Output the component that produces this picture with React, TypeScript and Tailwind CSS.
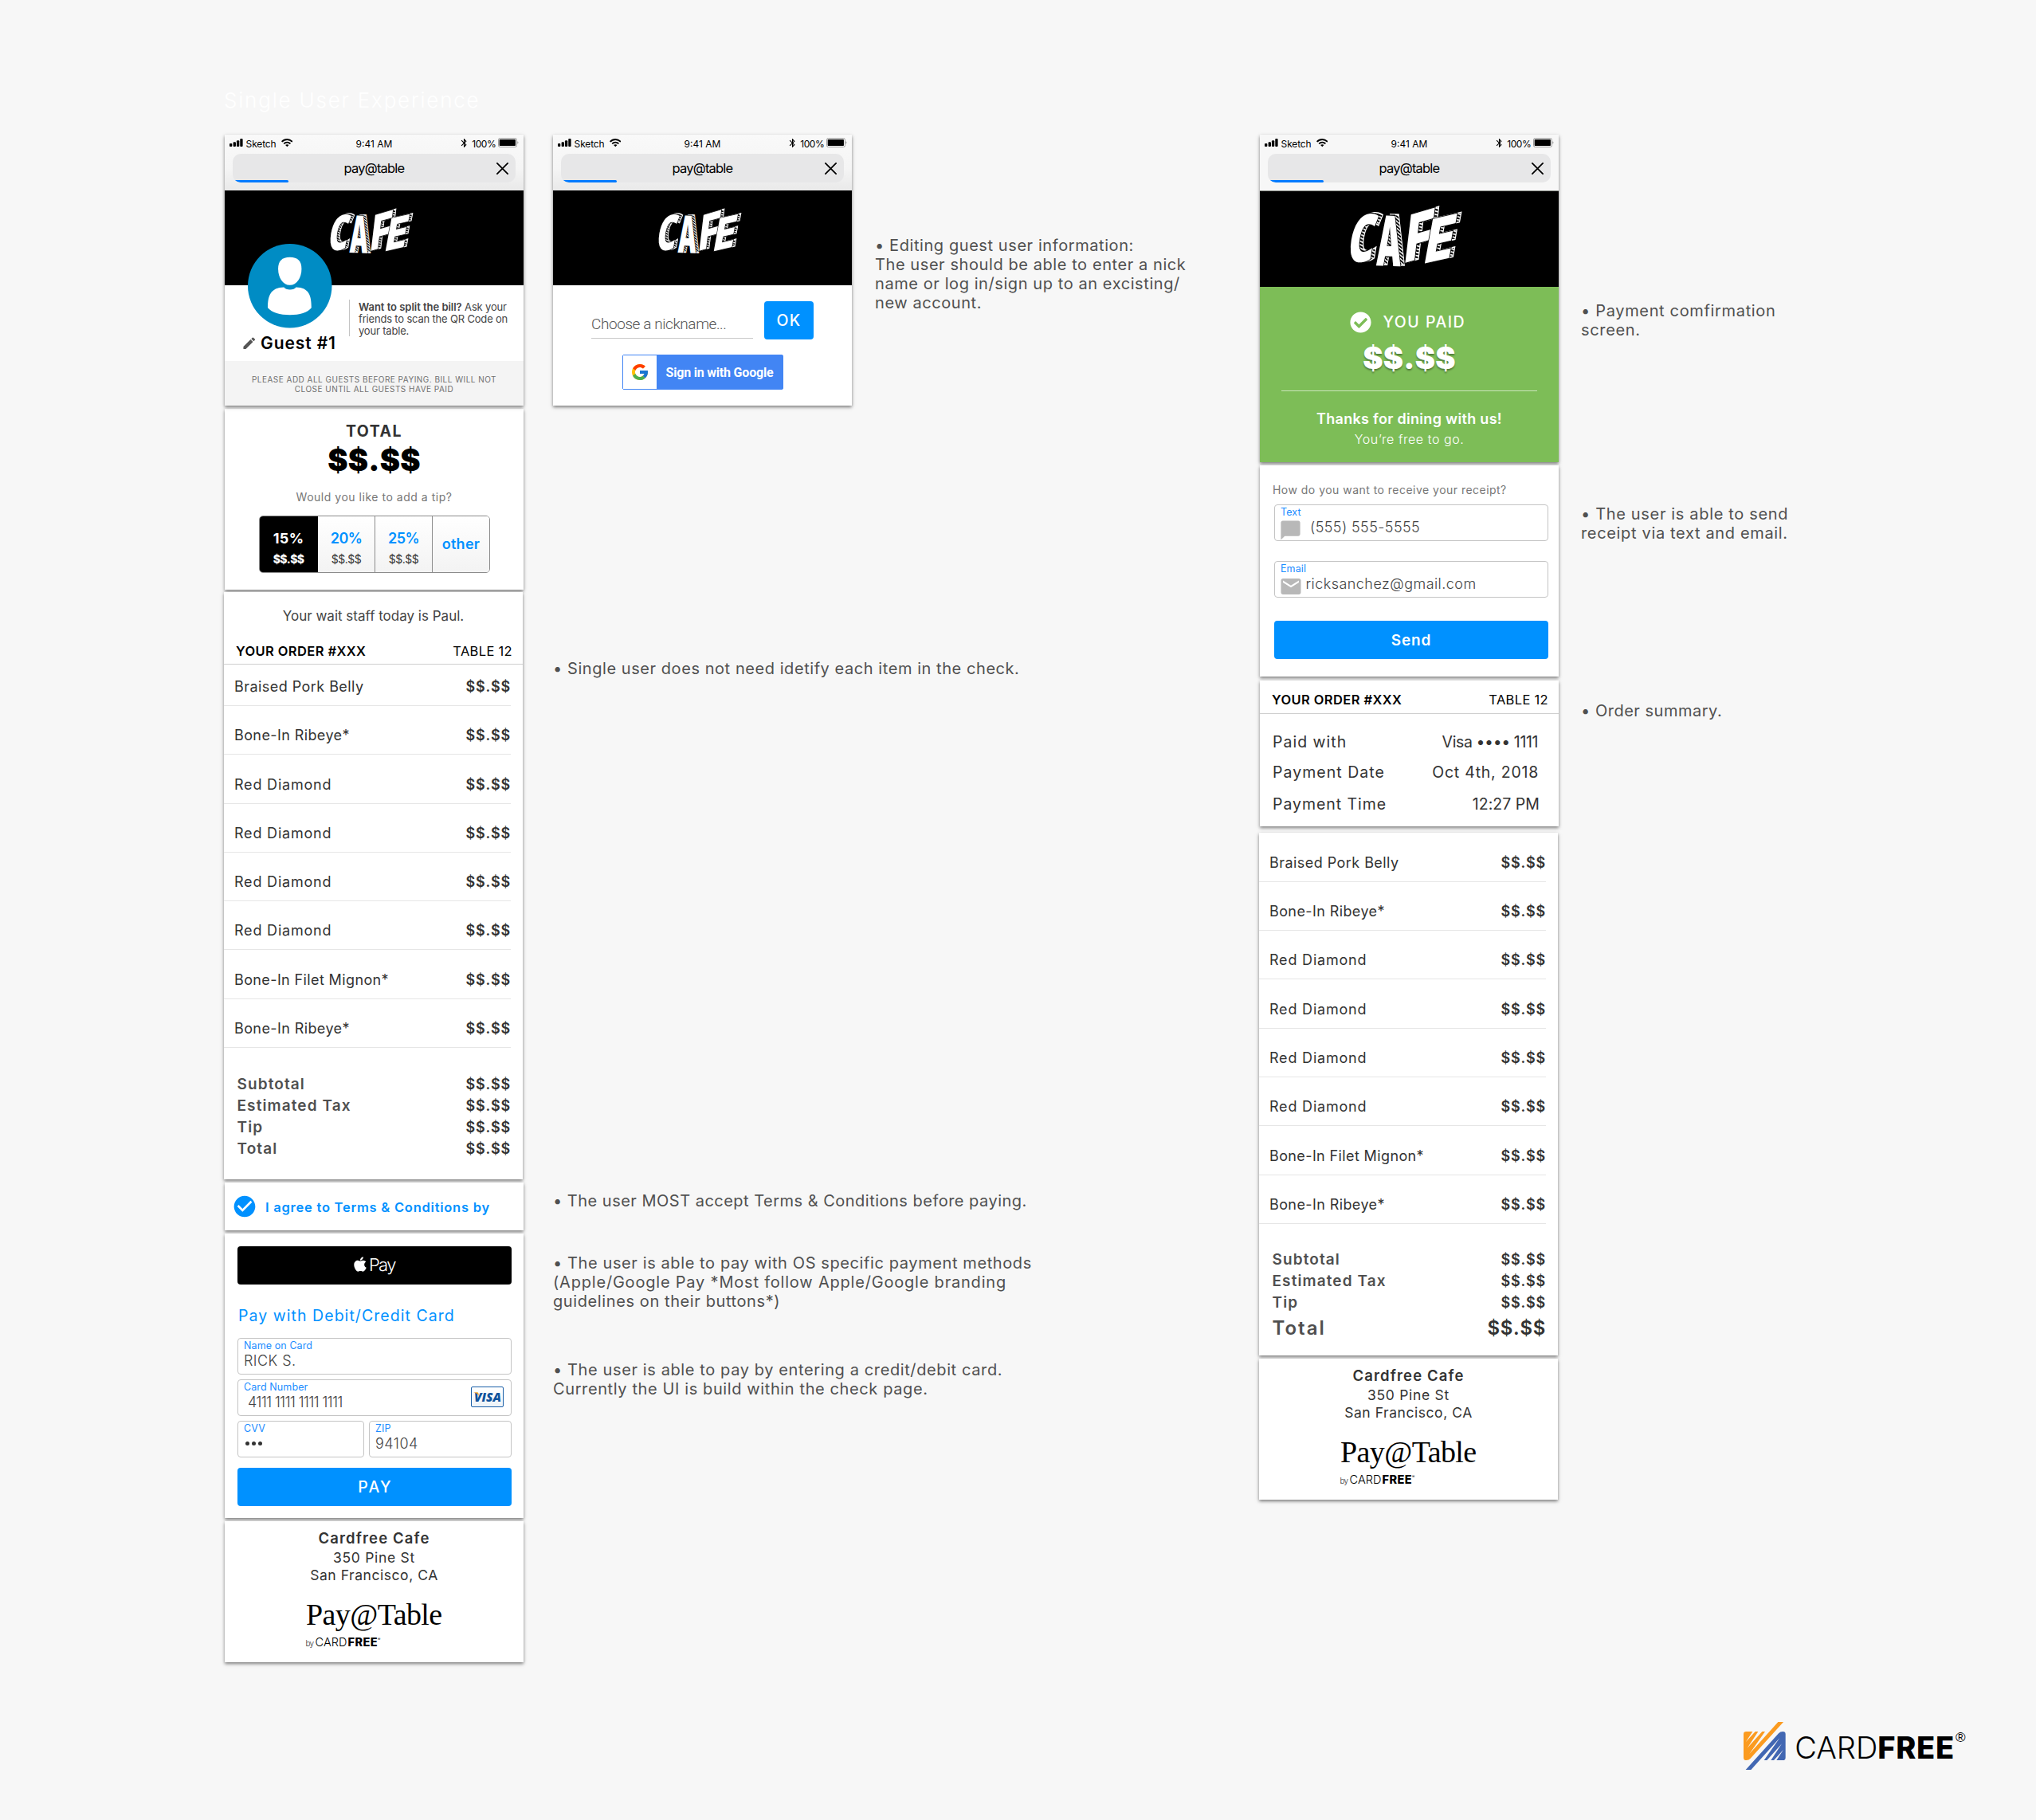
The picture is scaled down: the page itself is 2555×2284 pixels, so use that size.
import type { ReactNode } from "react";
import { FaApple, FaCheckCircle } from "react-icons/fa";
import { FcGoogle } from "react-icons/fc";
import { MdBluetooth, MdChatBubble, MdCheckCircle, MdEdit, MdEmail } from "react-icons/md";

const CARD = "shadow-[0_2px_4px_rgba(0,0,0,0.5)]";

const ITEMS = [
  { name: "Braised Pork Belly", tracking: "tracking-[0.45px]" },
  { name: "Bone-In Ribeye*", tracking: "tracking-[0.4px]" },
  { name: "Red Diamond", tracking: "tracking-[0.8px]" },
  { name: "Red Diamond", tracking: "tracking-[0.8px]" },
  { name: "Red Diamond", tracking: "tracking-[0.8px]" },
  { name: "Red Diamond", tracking: "tracking-[0.8px]" },
  { name: "Bone-In Filet Mignon*", tracking: "tracking-[0.38px]" },
  { name: "Bone-In Ribeye*", tracking: "tracking-[0.4px]" },
];

function SignalIcon() {
  return (
    <svg viewBox="0 0 50 30" className="h-[10px] w-[16.6px]" fill="#000">
      <rect x="0" y="18" width="10" height="12" rx="3" />
      <rect x="14" y="13" width="10" height="17" rx="3" />
      <rect x="27" y="7" width="10" height="23" rx="3" />
      <rect x="40" y="0" width="10" height="30" rx="3" />
    </svg>
  );
}

function WifiIcon() {
  return (
    <svg viewBox="0 0 44 32" className="h-[10.6px] w-[14.6px]" fill="none" stroke="#000" strokeWidth="5.500">
      <path d="M2 12C13 0 31 0 42 12" />
      <path d="M9.500 19.500C16.500 12 27.500 12 34.500 19.500" />
      <path d="M22 31l-6.500-6.500c3.500-3.500 9.500-3.500 13 0z" fill="#000" stroke="none" />
    </svg>
  );
}

function BatteryIcon() {
  return (
    <svg viewBox="0 0 77 36" className="h-[12px] w-[25.6px]">
      <rect x="1.500" y="1.500" width="69" height="33" rx="6" fill="none" stroke="#8a8a8a" strokeWidth="2.500" />
      <rect x="5" y="6" width="61" height="24" rx="2" fill="#000" />
      <path d="M73.500 13c4 2 4 8 0 10z" fill="#8a8a8a" />
    </svg>
  );
}

function BrowserBar({ flat = false }: { flat?: boolean }) {
  return (
    <div className={flat ? "h-[70px] bg-[#f7f7f7]" : "h-[70px] bg-linear-to-b from-[#f9f9f9] from-0% via-[#f5f5f5] via-60% to-[#e9e9e9] to-100%"}>
      <div className="grid h-[24px] grid-cols-[1fr_auto_1fr] px-[6px] text-[12px] leading-[24px] text-black">
        <div className="flex">
          <div className="pt-[5px]"><SignalIcon /></div>
          <span className="ml-[4px] tracking-[-0.14px]">Sketch</span>
          <div className="ml-[6px] pt-[5px]"><WifiIcon /></div>
        </div>
        <span>9:41 AM</span>
        <div className="flex justify-end">
          <MdBluetooth className="mt-[4px] size-[13px]" />
          <span className="ml-[3px] tracking-[-0.4px]">100%</span>
          <div className="ml-[3px] pt-[4px]"><BatteryIcon /></div>
        </div>
      </div>
      <div className="relative mx-[10px] grid h-[36px] grid-cols-[1fr_auto_1fr] items-center overflow-hidden rounded-[10px] bg-[#e7e7e8]">
        <span />
        <span className="text-[16.500px] leading-[36px] tracking-[-0.800px] text-black">pay@table</span>
        <svg viewBox="0 0 15 15" className="mr-[9.500px] size-[15px] justify-self-end" stroke="#000" strokeWidth="1.8" strokeLinecap="round">
          <path d="M.9.900l13.200 13.200M14.100.900L.9 14.100" />
        </svg>
        <div className="absolute bottom-0 left-0 h-[3px] w-[70px] rounded-r-sm bg-[#007aff]" />
      </div>
    </div>
  );
}

const LETTERS = [
  { ch: "C", font: "'Open Sans', sans-serif", m: "matrix(1.58 -0.16 -0.42 2.5 -17 214)" },
  { ch: "A", font: "Inter, sans-serif", m: "matrix(1.22 0.04 -0.12 2.6 96 222)" },
  { ch: "F", font: "Inter, sans-serif", m: "matrix(1.75 -0.5 -0.3 2.5 200 214)" },
  { ch: "E", font: "Inter, sans-serif", m: "matrix(1.75 -0.4 -0.42 2.3 274 216)" },
];

function CafeLogo({ className, id }: { className: string; id: string }) {
  return (
    <svg viewBox="0 0 420 233" className={`overflow-visible ${className}`} fontWeight="900" fontSize="100">
      <defs>
        <pattern id={id} width="4.500" height="4.500" patternUnits="userSpaceOnUse" patternTransform="rotate(20)">
          <rect width="4.500" height="4.500" fill="#000" />
          <rect width="4.500" height="2" fill="#fff" />
        </pattern>
      </defs>
      {LETTERS.map((l) => (
        <g key={l.ch}>
          <use href={`#${id}-${l.ch}`} transform="translate(15 -4)" fill={`url(#${id})`} stroke="#fff" strokeWidth="2" />
          <use href={`#${id}-${l.ch}`} fill="#000" stroke="#000" strokeWidth="3" />
          <g fill="#fff">
            <text id={`${id}-${l.ch}`} fontFamily={l.font} transform={l.m}>{l.ch}</text>
          </g>
        </g>
      ))}
    </svg>
  );
}

function Avatar() {
  return (
    <svg viewBox="0 0 316 316" className="absolute top-[137px] left-[29.300px] size-[105.500px]">
      <circle cx="158" cy="158" r="158" fill="#008cc4" />
      <path fill="#fff" d="M158 50c30 0 44 15 44 44 0 33-18 61-44 61s-44-28-44-61c0-29 14-44 44-44z" />
      <path fill="#fff" d="M75 240c0-44 10-76 61-77 6 12 39 12 45 0 50 1 58 33 58 77-14 18-44 27-81 27s-68-9-83-27z" />
    </svg>
  );
}

function OrderHeader({ className }: { className: string }) {
  return (
    <div className={`flex justify-between border-b border-[#cfcfcf] pr-[13px] pl-[15px] text-[16.500px] text-black ${className}`}>
      <span className="font-semibold tracking-[0.39px]">YOUR ORDER #XXX</span>
      <span className="tracking-[0.32px]">TABLE 12</span>
    </div>
  );
}

function ItemRows({ firstClass }: { firstClass: string }) {
  return (
    <>
      {ITEMS.map((item, i) => (
        <div
          key={i}
          className={`flex w-[360px] items-end justify-between border-b border-[#e6e6e6] pb-[11px] pl-[13px] text-[18px] leading-[24px] text-[#333] ${i === 0 ? firstClass : "h-[61.300px]"}`}
        >
          <span className={item.tracking}>{item.name}</span>
          <span className="font-semibold tracking-[0.78px]">$$.$$</span>
        </div>
      ))}
    </>
  );
}

function TotalRow({ label }: { label: string }) {
  return (
    <div className="flex w-[360px] justify-between pl-[16.500px] leading-[27px]">
      <span className="text-[19px] font-semibold tracking-[1.100px] text-[#4f4f4f]">{label}</span>
      <span className="text-[18px] font-semibold tracking-[0.78px] text-[#333]">$$.$$</span>
    </div>
  );
}

function Field({ label, className = "", children }: { label: string; className?: string; children: ReactNode }) {
  return (
    <div className={`relative h-[46px] rounded-[4px] border border-[#c4c4c4] px-[7px] pt-px ${className}`}>
      <div className="text-[12.500px] leading-[15px] tracking-[0.1px] text-[#1a8cff]">{label}</div>
      <div className="mt-px text-[18px] leading-[21px] font-light text-[#444]">{children}</div>
    </div>
  );
}

function VisaBadge() {
  return (
    <div className="absolute top-[8px] right-[9px] flex h-[26px] w-[41px] items-center justify-center rounded-[2px] border border-[#1a5fa8] bg-linear-to-b from-white to-[#eef3f8]">
      <svg viewBox="0 0 38 22" className="h-[22px] w-[38px] overflow-visible" fontFamily="'Open Sans', sans-serif" fontWeight="800" fontStyle="italic" fontSize="16.500">
        <text x="2" y="17" textLength="34" lengthAdjust="spacingAndGlyphs" fill="#0e529c">VISA</text>
        <path d="M1.500 5.200h4.300c.8 0 1.300.4 1.500 1.100l.9 3.900C6.900 7.800 4.500 6.100 1.500 5.600z" fill="#f0a028" />
      </svg>
    </div>
  );
}

function CafeFooter() {
  return (
    <div className={`mt-[4px] h-[177px] w-[375px] bg-white pt-[9px] text-[#333] ${CARD}`}>
      <div className="text-center text-[18.500px] leading-[24px] font-semibold tracking-[1.130px]">Cardfree Cafe</div>
      <div className="mt-[2px] text-center text-[17.500px] leading-[22px] tracking-[0.7px]">350 Pine St</div>
      <div className="text-center text-[17.500px] leading-[21px] tracking-[0.55px]">San Francisco, CA</div>
      <div className="mt-[18px] ml-[102px] font-['Liberation_Serif',serif] text-[38px] leading-[42px] tracking-[-0.58px] text-black">Pay@Table</div>
      <div className="mt-[6px] ml-[101.500px] flex leading-[16px] text-black">
        <span className="w-[12px] pt-px text-[10px] font-light tracking-[-0.8px] text-[#333]">by</span>
        <span className="w-[40px] text-[14.500px] font-light tracking-[0.1px]">CARD</span>
        <span className="ml-px text-[14.500px] font-extrabold tracking-[0.4px]">FREE</span>
        <span className="text-[5px] leading-[8px]">®</span>
      </div>
    </div>
  );
}

function Note({ className = "", children }: { className?: string; children: ReactNode }) {
  return <p className={`text-[20px] leading-[24px] whitespace-pre text-[#505050] ${className}`}>{children}</p>;
}

function TipOption({ pct, className }: { pct: string; className: string }) {
  return (
    <div className={`flex flex-col items-center bg-linear-to-b from-white to-[#f3f3f3] pt-[18px] ${className}`}>
      <span className="text-[18px] leading-[20px] font-semibold tracking-[-0.6px] text-[#0091ff]">{pct}</span>
      <span className="mt-[8px] text-[14px] leading-[16px] tracking-[-0.5px] text-[#333]">$$.$$</span>
    </div>
  );
}

function CheckScreen() {
  return (
    <div className="w-[376px] shrink-0">
      <div className={`relative ml-px h-[340px] w-[375px] bg-white ${CARD}`}>
        <BrowserBar />
        <div className="h-[119px] bg-black pt-[22.500px] pl-[132px]">
          <CafeLogo id="hatch-a" className="h-[58px] w-[104px]" />
        </div>
        <Avatar />
        <div className="flex h-[95px]">
          <div className="flex w-[156px] shrink-0 items-start pt-[60px] pl-[21px]">
            <MdEdit className="mt-[3px] size-[19.500px] text-[#555]" />
            <span className="ml-[4.500px] text-[21px] leading-[25px] font-semibold tracking-[0.9px] whitespace-nowrap text-black">Guest #1</span>
          </div>
          <div className="mt-[18px] h-[46px] w-px bg-[#c4c4c4]" />
          <div className="mt-[20px] ml-[11px] text-[13px] leading-[15px] tracking-[-0.18px] whitespace-nowrap text-[#444]">
            <div><span className="font-semibold tracking-[-0.03px]">Want to split the bill?</span> Ask your</div>
            <div>friends to scan the QR Code on</div>
            <div>your table.</div>
          </div>
        </div>
        <div className="h-[56px] bg-[#f4f4f4] pt-[17px] text-center text-[10px] leading-[12px] tracking-[0.48px] text-[#707070]">
          <div>PLEASE ADD ALL GUESTS BEFORE PAYING. BILL WILL NOT</div>
          <div>CLOSE UNTIL ALL GUESTS HAVE PAID</div>
        </div>
      </div>

      <div className={`mt-[4px] ml-px h-[227px] w-[375px] bg-white pt-[18px] text-center ${CARD}`}>
        <div className="text-[19.500px] leading-[20px] font-bold tracking-[1.500px] text-[#333]">TOTAL</div>
        <div className="mt-[3px] text-[38px] leading-[46px] font-black tracking-[0.2px] text-black">$$.$$</div>
        <div className="mt-[14px] text-[14px] leading-[20px] tracking-[0.52px] text-[#777]">Would you like to add a tip?</div>
        <div className="mt-[13px] ml-[43px] flex h-[72px] w-[290px] overflow-hidden rounded-[5px] border border-[#8c8c8c]">
          <div className="-my-px -ml-px flex w-[74px] flex-col items-center bg-black pt-[19px] text-white">
            <span className="text-[18px] leading-[20px] font-bold tracking-[0.3px]">15%</span>
            <span className="mt-[8px] text-[14px] leading-[16px] font-extrabold tracking-[-0.67px]">$$.$$</span>
          </div>
          <TipOption pct="20%" className="w-[71px]" />
          <TipOption pct="25%" className="w-[72px] border-l border-[#8c8c8c]" />
          <div className="flex-1 border-l border-[#8c8c8c] bg-linear-to-b from-white to-[#f3f3f3] pt-[24px] text-[18px] leading-[22px] font-semibold tracking-[0.3px] text-[#0091ff]">other</div>
        </div>
      </div>

      <div className={`mt-[3px] h-[737px] w-[375px] bg-white pt-[18px] ${CARD}`}>
        <div className="text-center text-[17px] leading-[24px] text-[#444]">Your wait staff today is Paul.</div>
        <OrderHeader className="mt-[15px] h-[34px] leading-[34px]" />
        <ItemRows firstClass="h-[52px]" />
        <div className="pt-[31.500px]">
          <TotalRow label="Subtotal" />
          <TotalRow label="Estimated Tax" />
          <TotalRow label="Tip" />
          <TotalRow label="Total" />
        </div>
      </div>

      <div className={`mt-[4px] ml-px flex h-[60px] w-[375px] items-center bg-white pl-[9px] ${CARD}`}>
        <MdCheckCircle className="size-[32px] text-[#0091ff]" />
        <span className="mt-[3px] ml-[10px] text-[16.500px] font-semibold tracking-[0.76px] text-[#0091ff]">I agree to Terms &amp; Conditions by</span>
      </div>

      <div className={`mt-[4px] ml-px h-[357px] w-[375px] bg-white pt-[16px] pr-[15px] pl-[16px] ${CARD}`}>
        <div className="flex h-[48px] items-start rounded-[4px] bg-black pl-[145px] text-white">
          <FaApple className="mt-[11.500px] h-[21px] w-[18px]" />
          <span className="ml-[2px] text-[22px] leading-[47px] font-light tracking-[-1.700px]">Pay</span>
        </div>
        <div className="mt-[27px] ml-px text-[19.500px] leading-[24px] tracking-[1.050px] text-[#0091ff]">Pay with Debit/Credit Card</div>
        <Field label="Name on Card" className="mt-[16px]"><span className="tracking-[0.45px]">RICK S.</span></Field>
        <Field label="Card Number" className="mt-[6px]">
          <span className="ml-[5px] tracking-[-0.73px]">4111 1111 1111 1111</span>
          <VisaBadge />
        </Field>
        <div className="mt-[6px] flex gap-[6px]">
          <Field label="CVV" className="w-[159px]">
            <div className="flex h-[21px] items-center gap-[3.200px] pl-[1.500px]">
              <i className="size-[5px] rounded-full bg-[#333]" />
              <i className="size-[5px] rounded-full bg-[#333]" />
              <i className="size-[5px] rounded-full bg-[#333]" />
            </div>
          </Field>
          <Field label="ZIP" className="flex-1"><span className="tracking-[0.48px]">94104</span></Field>
        </div>
        <div className="mt-[13px] h-[48px] rounded-[4px] bg-[#0091ff] pl-[2px] text-center text-[19.500px] leading-[49px] font-medium tracking-[2.100px] text-white">PAY</div>
      </div>

      <div className="ml-px"><CafeFooter /></div>
    </div>
  );
}

function NicknameScreen() {
  return (
    <div className={`h-[340px] w-[375px] shrink-0 bg-white ${CARD}`}>
      <BrowserBar />
      <div className="h-[119px] bg-black pt-[22.500px] pl-[132px]">
        <CafeLogo id="hatch-b" className="h-[58px] w-[104px]" />
      </div>
      <div className="flex pt-[20px] pl-[49px]">
        <div className="-ml-px h-[47px] w-[203px] border-b border-[#c8c8c8] pt-[18px] font-['Roboto',sans-serif] text-[19px] leading-[22px] font-light tracking-[-0.42px] text-[#555]">Choose a nickname...</div>
        <div className="ml-[14px] h-[48px] w-[62px] rounded-[4px] bg-[#0091ff] text-center text-[19.500px] leading-[49px] font-medium tracking-[1.200px] text-white">OK</div>
      </div>
      <div className="mt-[19px] ml-[87px] flex h-[44px] w-[202px] rounded-[2px] border border-[#4285f4] bg-[#4285f4]">
        <div className="flex w-[42px] items-center justify-center bg-white"><FcGoogle className="size-[24px]" /></div>
        <div className="pl-[11.500px] font-['Roboto',sans-serif] text-[16px] leading-[43px] font-bold tracking-[-0.2px] text-white">Sign in with Google</div>
      </div>
    </div>
  );
}

function ReceiptScreen() {
  return (
    <div className="w-[376px] shrink-0">
      <div className={`ml-px h-[411px] w-[375px] bg-[#7dbd57] text-center text-white ${CARD}`}>
        <BrowserBar flat />
        <div className="h-[121px] border-t border-[#8a8f88] bg-black pt-[19px] pl-[113px]">
          <CafeLogo id="hatch-c" className="h-[78px] w-[140px]" />
        </div>
        <div className="flex items-center pt-[31px] pl-[113px]">
          <FaCheckCircle className="size-[27px]" />
          <span className="ml-[14.500px] text-[19.500px] leading-[27px] font-medium tracking-[1.500px]">YOU PAID</span>
        </div>
        <div className="mt-[8px] text-[38px] leading-[46px] font-black tracking-[0.2px] [text-shadow:0_2px_2px_rgba(0,0,0,0.35)]">$$.$$</div>
        <div className="mx-auto mt-[18px] h-px w-[321px] bg-white/60" />
        <div className="mt-[22px] text-[18px] leading-[25px] font-semibold tracking-[0.3px]">Thanks for dining with us!</div>
        <div className="mt-px text-[16px] leading-[25px] font-light tracking-[0.55px]">You’re free to go.</div>
      </div>

      <div className={`mt-[4px] ml-px h-[265px] w-[375px] bg-white pt-[21px] pr-[13px] pl-[18px] ${CARD}`}>
        <div className="-ml-[2px] text-[14px] leading-[20px] tracking-[0.47px] text-[#777]">How do you want to receive your receipt?</div>
        <Field label="Text" className="mt-[8px]">
          <MdChatBubble className="absolute top-[17px] left-[5px] size-[29px] text-[#b8b8b8]" />
          <span className="ml-[37px] tracking-[0.4px]">(555) 555-5555</span>
        </Field>
        <Field label="Email" className="mt-[25.200px]">
          <MdEmail className="absolute top-[15.500px] left-[5px] size-[30px] text-[#b8b8b8]" />
          <span className="ml-[31.500px] tracking-[0.45px]">ricksanchez@gmail.com</span>
        </Field>
        <div className="mt-[28.800px] h-[48px] rounded-[4px] bg-[#0091ff] text-center text-[19px] leading-[49px] font-semibold tracking-[0.83px] text-white">Send</div>
      </div>

      <div className={`mt-[5px] ml-px h-[183px] w-[375px] bg-white text-[19.500px] leading-[30px] text-[#333] ${CARD}`}>
        <OrderHeader className="h-[42px] pt-[7px] leading-[35px]" />
        <div className="mt-[20px] flex justify-between pr-[26px] pl-[16px]">
          <span className="tracking-[1.010px]">Paid with</span>
          <span className="tracking-[-0.4px]">Visa •••• 1111</span>
        </div>
        <div className="mt-[8px] flex justify-between pr-[25px] pl-[16px]">
          <span className="tracking-[1.030px]">Payment Date</span>
          <span className="tracking-[0.77px]">Oct 4th, 2018</span>
        </div>
        <div className="mt-[10px] flex justify-between pr-[24px] pl-[16px]">
          <span className="tracking-[0.950px]">Payment Time</span>
          <span className="tracking-[0.04px]">12:27 PM</span>
        </div>
      </div>

      <div className={`mt-[8px] h-[656px] w-[375px] bg-white ${CARD}`}>
        <ItemRows firstClass="h-[61.800px]" />
        <div className="pt-[31.500px]">
          <TotalRow label="Subtotal" />
          <TotalRow label="Estimated Tax" />
          <TotalRow label="Tip" />
          <div className="flex w-[360px] justify-between pl-[16.500px] text-[24px] leading-[37px] font-semibold">
            <span className="tracking-[2px] text-[#4f4f4f]">Total</span>
            <span className="tracking-[0.7px] text-[#333]">$$.$$</span>
          </div>
        </div>
      </div>
      <CafeFooter />
    </div>
  );
}

function CardfreeLogo() {
  const stripes =
    "M0 46Q0 36 10 36H34L8 76L44 36H55L14 98L70 36H81L22 120L130 0H150L26 137Q20 144 10 144Q0 144 0 134Z";
  return (
    <div className="flex text-[38px] leading-[65px] text-black">
      <svg viewBox="0 0 158 180" className="h-[60px] w-[52.700px]">
        <path d={stripes} fill="#fb9b20" />
        <path d={stripes} fill="#4267b2" transform="rotate(180 79 90)" />
      </svg>
      <span className="ml-[11.500px] w-[104px] font-light">CARD</span>
      <span className="font-extrabold tracking-[0.75px]">FREE</span>
      <span className="ml-px font-['Liberation_Sans',sans-serif] text-[17px] leading-[39px]">®</span>
    </div>
  );
}

export default function App() {
  return (
    <div className="h-[2284px] w-[2555px] overflow-hidden bg-[#f7f7f7] pt-[106px] font-['Inter',sans-serif]">
      <h1 className="mb-[23px] ml-[281px] h-[40px] text-[26px] leading-[40px] font-light tracking-[1.800px] text-white">Single User Experience</h1>
      <main className="ml-[281px] flex h-[1917px]">
        <CheckScreen />
        <div className="ml-[37px] w-[886px] shrink-0">
          <div className="flex">
            <NicknameScreen />
            <Note className="mt-[127px] ml-[29px] tracking-[0.58px]">{"• Editing guest user information:\nThe user should be able to enter a nick\nname or log in/sign up to an excisting/\nnew account."}</Note>
          </div>
          <Note className="mt-[318px] tracking-[0.56px]">• Single user does not need idetify each item in the check.</Note>
          <Note className="mt-[644px] tracking-[0.49px]">• The user MOST accept Terms &amp; Conditions before paying.</Note>
          <Note className="mt-[54px] tracking-[0.6px]">
            {"• The user is able to pay with OS specific payment methods\n"}
            <span className="tracking-[0.8px]">{"(Apple/Google Pay *Most follow Apple/Google branding\n"}</span>
            {"guidelines on their buttons*)"}
          </Note>
          <Note className="mt-[62px] tracking-[0.61px]">{"• The user is able to pay by entering a credit/debit card.\nCurrently the UI is build within the check page."}</Note>
        </div>
        <ReceiptScreen />
        <div className="ml-[28px] tracking-[0.66px]">
          <Note className="mt-[209px]">{"• Payment comfirmation\nscreen."}</Note>
          <Note className="mt-[207px]">{"• The user is able to send\nreceipt via text and email."}</Note>
          <Note className="mt-[199px] tracking-[0.51px]">• Order summary.</Note>
        </div>
      </main>
      <footer className="mt-[75px] ml-[2188px]"><CardfreeLogo /></footer>
    </div>
  );
}
